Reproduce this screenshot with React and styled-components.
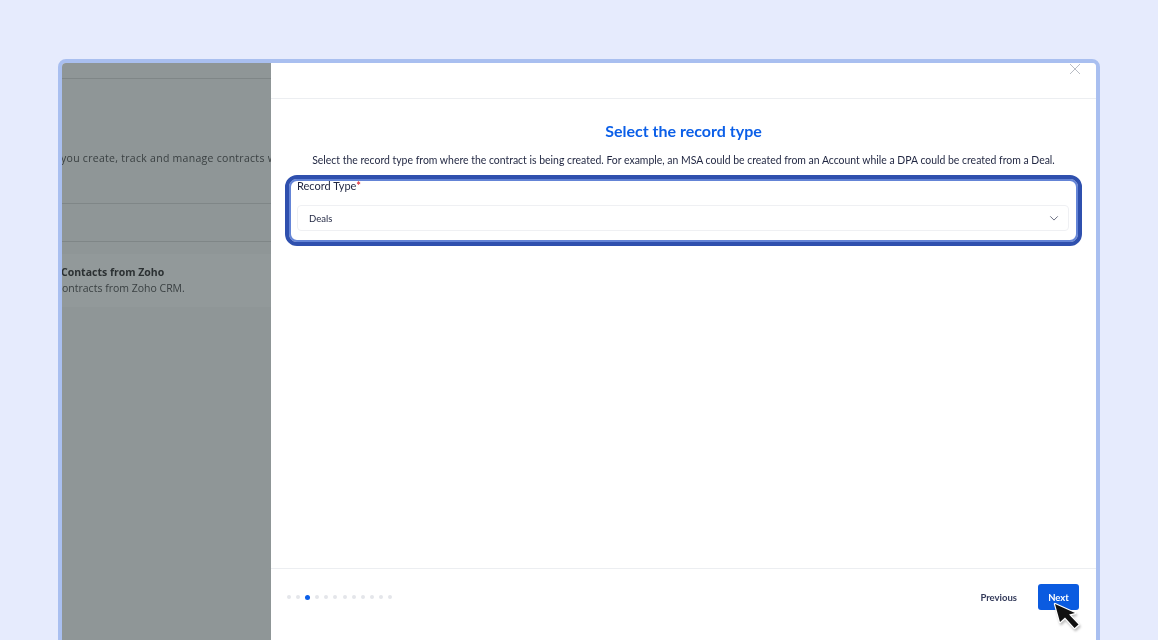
import React from "react";
import styled, { createGlobalStyle } from "styled-components";

const Global = createGlobalStyle`
  html, body {
    margin: 0;
    padding: 0;
    height: 640px;
    overflow: hidden;
    background: #e6ebfd;
  }
`;

const Page = styled.div`
  position: relative;
  width: 1158px;
  height: 640px;
  padding: 59px 58px 0;
  box-sizing: border-box;
  overflow: hidden;
`;

const Frame = styled.div`
  display: flex;
  height: 600px;
  box-sizing: border-box;
  border: 4px solid #a9bff0;
  border-radius: 8px 8px 0 0;
  overflow: hidden;
  filter: blur(0.35px);
`;

const Backdrop = styled.div`
  width: 209px;
  flex: none;
  display: flex;
  flex-direction: column;
  background: #8f9697;
  overflow: hidden;
  white-space: nowrap;
  font-family: "Open Sans", sans-serif;
  font-size: 10.5px;
  color: #3a4042;
`;

const BackRow = styled.div`
  height: ${(p) => p.$h}px;
  flex: none;
  box-sizing: border-box;
  border-bottom: 1px solid #7f8687;
  display: flex;
  align-items: center;
`;

const Blurb = styled.div`
  margin: 34px 0 0 -1px;
  letter-spacing: 0.28px;
`;

const Band = styled.div`
  margin-top: 12px;
  height: 53px;
  flex: none;
  box-sizing: border-box;
  padding-top: 10px;
  background: #92999a;
  line-height: 16px;
`;

const BandTitle = styled.div`
  font-weight: 700;
  color: #2b3032;
  margin-left: -1px;
`;

const Modal = styled.div`
  flex: 1;
  display: flex;
  flex-direction: column;
  background: #fff;
  font-family: Lato, sans-serif;
  color: #1f2540;
`;

const ModalHead = styled.div`
  height: 36px;
  flex: none;
  box-sizing: border-box;
  border-bottom: 1px solid #eceef1;
  display: flex;
  justify-content: flex-end;
  padding: 1px 16px 0 0;
`;

const Close = styled.svg`
  width: 10px;
  height: 10px;
`;

const ModalBody = styled.div`
  flex: 1;
  display: flex;
  flex-direction: column;
  align-items: center;
  padding: 22px 14px 0;
`;

const Title = styled.h2`
  margin: 0;
  font-size: 16px;
  line-height: 20px;
  font-weight: 700;
  color: #0b5fe8;
`;

const Sub = styled.p`
  margin: 12px 0 0;
  font-size: 10.45px;
  line-height: 14px;
  white-space: nowrap;
`;

const Highlight = styled.div`
  align-self: stretch;
  margin-top: 8px;
  height: 71px;
  box-sizing: border-box;
  border: 4px solid #2f50ae;
  border-radius: 12px;
  box-shadow: inset 0 0 0 2px #6484d6;
  padding: 0 9px 0 8px;
`;

const FieldLabel = styled.label`
  display: block;
  font-size: 11px;
  line-height: 14px;
`;

const Req = styled.span`
  color: #e0323c;
  font-weight: 700;
`;

const Select = styled.div`
  margin-top: 12px;
  height: 26px;
  box-sizing: border-box;
  border: 1px solid #eff0f3;
  border-radius: 4px;
  display: flex;
  align-items: center;
  justify-content: space-between;
  padding: 0 9.5px 0 11px;
  font-size: 9.5px;
`;

const Chevron = styled.svg`
  width: 10px;
  height: 10px;
`;

const ModalFoot = styled.div`
  height: 87px;
  flex: none;
  box-sizing: border-box;
  border-top: 1px solid #eceef1;
  display: flex;
  align-items: flex-start;
  justify-content: space-between;
  padding: 15px 17px 0 16px;
`;

const Dots = styled.div`
  display: flex;
  align-items: center;
  gap: 5.1px;
  height: 26px;
`;

const Dot = styled.span`
  width: ${(p) => (p.$active ? 5 : 4)}px;
  height: ${(p) => (p.$active ? 5 : 4)}px;
  border-radius: 50%;
  background: ${(p) => (p.$active ? "#0b5fe8" : "#e4e6ea")};
`;

const Actions = styled.div`
  display: flex;
  align-items: center;
  gap: 21px;
`;

const PrevButton = styled.button`
  border: 0;
  padding: 0;
  background: none;
  font-family: Lato, sans-serif;
  font-size: 9.5px;
  font-weight: 700;
  color: #333a5a;
`;

const NextButton = styled.button`
  width: 41px;
  height: 26px;
  border: 0;
  padding: 0;
  border-radius: 3px;
  background: #0b5be0;
  font-family: Lato, sans-serif;
  font-size: 9.5px;
  font-weight: 700;
  color: #fff;
`;

const Cursor = styled.svg`
  position: absolute;
  left: 1052px;
  top: 600px;
  width: 34px;
  height: 34px;
  filter: drop-shadow(1px 2px 1px rgba(0, 0, 0, 0.25));
`;

export default function App() {
  return (
    <Page>
      <Global />
      <Frame>
        <Backdrop>
          <BackRow $h={16} />
          <BackRow $h={125}>
            <Blurb>you create, track and manage contracts with</Blurb>
          </BackRow>
          <BackRow $h={38} />
          <Band>
            <BandTitle>Contacts from Zoho</BandTitle>
            <div>ontracts from Zoho CRM.</div>
          </Band>
        </Backdrop>
        <Modal>
          <ModalHead>
            <Close viewBox="0 0 10 10" fill="none" stroke="#b8bcc4" strokeWidth="1">
              <path d="M0 0 L10 10 M10 0 L0 10" />
            </Close>
          </ModalHead>
          <ModalBody>
            <Title>Select the record type</Title>
            <Sub>
              Select the record type from where the contract is being created. For example, an MSA could be created from an Account while a DPA could be created from a Deal.
            </Sub>
            <Highlight>
              <FieldLabel>
                Record Type<Req>*</Req>
              </FieldLabel>
              <Select>
                Deals
                <Chevron viewBox="0 0 12 12" fill="none" stroke="#6a6f82" strokeWidth="1.2">
                  <path d="M1.5 4 L6 8.5 L10.5 4" />
                </Chevron>
              </Select>
            </Highlight>
          </ModalBody>
          <ModalFoot>
            <Dots>
              {Array.from({ length: 12 }, (_, i) => (
                <Dot key={i} $active={i === 2} />
              ))}
            </Dots>
            <Actions>
              <PrevButton>Previous</PrevButton>
              <NextButton>Next</NextButton>
            </Actions>
          </ModalFoot>
        </Modal>
      </Frame>
      <Cursor viewBox="0 0 34 34">
        <path
          d="M3 4 L8 22 L13 17.5 L22.5 28 L26.5 24.5 L17 14.5 L23 13 Z"
          fill="#111"
          stroke="#fff"
          strokeWidth="2.4"
          strokeLinejoin="round"
          paintOrder="stroke"
        />
      </Cursor>
    </Page>
  );
}
